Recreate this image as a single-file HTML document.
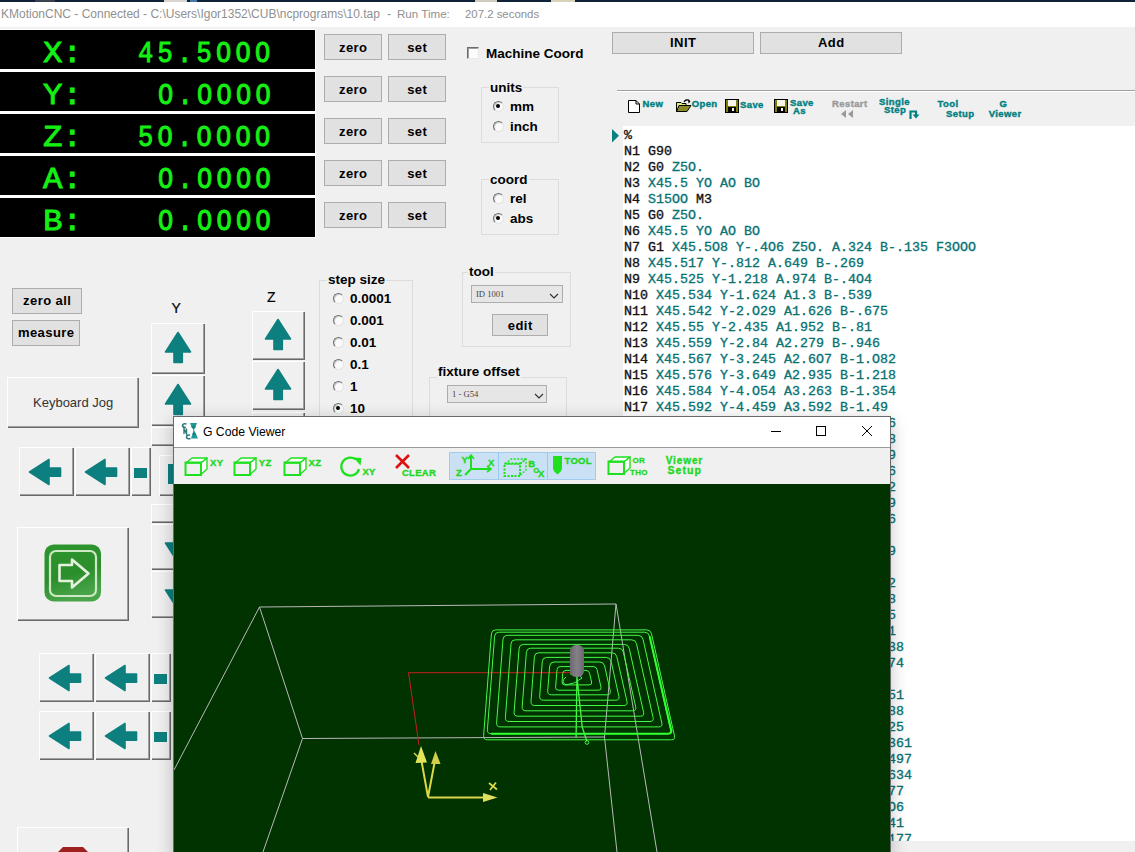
<!DOCTYPE html><html><head><meta charset="utf-8"><style>
*{margin:0;padding:0;box-sizing:border-box}
html,body{width:1135px;height:852px;overflow:hidden;background:#f0f0f0;position:relative;font-family:"Liberation Sans",sans-serif}
.a{position:absolute}
.btn{position:absolute;background:#e1e1e1;border:1px solid #adadad;font-weight:bold;font-size:13px;letter-spacing:0.45px;text-indent:0.45px;color:#000;text-align:center}
.b3{position:absolute;background:#f0f0f0;border-top:1px solid #fff;border-left:1px solid #fff;box-shadow:inset -1px -1px 0 #a0a0a0, 1px 1px 0 #696969}
.grp{position:absolute;border:1px solid #dcdcdc;}
.lbl{position:absolute;font-weight:bold;font-size:13.5px;color:#000;white-space:pre;background:#f0f0f0;line-height:14px;margin-top:1px}
.dro{position:absolute;left:0;width:315px;height:39px;background:#000}
.drot{position:absolute;font-family:"Liberation Mono",monospace;font-weight:normal;-webkit-text-stroke:0.9px #14f014;font-size:32.5px;color:#14f014;line-height:32px;white-space:pre;transform:scaleY(0.89);transform-origin:0 24.7px}
.radio{position:absolute;width:11px;height:11px;margin:0.5px 0 0 0.5px;border-radius:50%;background:#fafafa;border:1px solid;border-color:#707070 #e4e4e4 #e4e4e4 #707070;box-shadow:inset 1px 1px 0 #d0d0d0}
.radio.on::after{content:"";position:absolute;left:2.5px;top:2.5px;width:4px;height:4px;border-radius:50%;background:#000}
.gc{position:absolute;left:624px;font-family:"Liberation Mono",monospace;font-weight:normal;-webkit-text-stroke:0.35px currentColor;font-size:13.333px;line-height:16px;white-space:pre;color:#111;transform:scaleY(0.89);transform-origin:0 11.55px}
.t{color:#087373}
.tb{position:absolute;font-weight:bold;font-size:9.5px;letter-spacing:0.4px;color:#008080;line-height:10px;white-space:pre;-webkit-text-stroke:0.4px currentColor}
.vt{position:absolute;font-weight:bold;font-size:10px;color:#1ed81e;line-height:10px;white-space:pre;-webkit-text-stroke:0.35px currentColor}
</style></head><body>
<div class="a" style="left:0;top:0;width:1135px;height:2px;background:#10213a"></div>
<div class="a" style="left:35px;top:0;width:20px;height:2px;background:#3a4250"></div>
<div class="a" style="left:164px;top:0;width:23px;height:2px;background:#d8d4d0"></div>
<div class="a" style="left:190px;top:0;width:7px;height:2px;background:#4a78a8"></div>
<div class="a" style="left:475px;top:0;width:22px;height:2px;background:#d0ccc0"></div>
<div class="a" style="left:551px;top:0;width:24px;height:2px;background:#d8d2b8"></div>
<div class="a" style="left:0;top:2px;width:1135px;height:25px;background:#fff"></div>
<div class="a" style="left:1px;top:6px;font-size:12px;line-height:16px;color:#909090;white-space:pre">KMotionCNC - Connected - C:\Users\Igor1352\CUB\ncprograms\10.tap</div>
<div class="a" style="left:387px;top:6px;font-size:12px;line-height:16px;color:#909090;white-space:pre">-</div>
<div class="a" style="left:397px;top:6px;font-size:11.6px;line-height:16px;color:#909090;white-space:pre">Run Time:</div>
<div class="a" style="left:465px;top:6px;font-size:11.4px;line-height:16px;color:#8f8f8f;white-space:pre">207.2 seconds</div>
<div class="a" style="left:0;top:29px;width:316px;height:209px;background:#fff"></div>
<div class="dro" style="top:30px"></div>
<div class="drot" style="left:43px;top:37.5px">X:</div>
<div class="drot" style="left:138.1px;top:37.6px;letter-spacing:5.5px;transform:scale(0.78,0.88);-webkit-text-stroke:1.1px #14f014">45.5OOO</div>
<div class="btn" style="left:324px;top:34px;width:58px;height:26px;line-height:25px">zero</div>
<div class="btn" style="left:388px;top:34px;width:58px;height:26px;line-height:25px">set</div>
<div class="dro" style="top:72px"></div>
<div class="drot" style="left:43px;top:79.5px">Y:</div>
<div class="drot" style="left:157.6px;top:79.6px;letter-spacing:5.5px;transform:scale(0.78,0.88);-webkit-text-stroke:1.1px #14f014">O.OOOO</div>
<div class="btn" style="left:324px;top:76px;width:58px;height:26px;line-height:25px">zero</div>
<div class="btn" style="left:388px;top:76px;width:58px;height:26px;line-height:25px">set</div>
<div class="dro" style="top:114px"></div>
<div class="drot" style="left:43px;top:121.5px">Z:</div>
<div class="drot" style="left:138.1px;top:121.6px;letter-spacing:5.5px;transform:scale(0.78,0.88);-webkit-text-stroke:1.1px #14f014">5O.OOOO</div>
<div class="btn" style="left:324px;top:118px;width:58px;height:26px;line-height:25px">zero</div>
<div class="btn" style="left:388px;top:118px;width:58px;height:26px;line-height:25px">set</div>
<div class="dro" style="top:156px"></div>
<div class="drot" style="left:43px;top:163.5px">A:</div>
<div class="drot" style="left:157.6px;top:163.6px;letter-spacing:5.5px;transform:scale(0.78,0.88);-webkit-text-stroke:1.1px #14f014">O.OOOO</div>
<div class="btn" style="left:324px;top:160px;width:58px;height:26px;line-height:25px">zero</div>
<div class="btn" style="left:388px;top:160px;width:58px;height:26px;line-height:25px">set</div>
<div class="dro" style="top:198px"></div>
<div class="drot" style="left:43px;top:205.5px">B:</div>
<div class="drot" style="left:157.6px;top:205.6px;letter-spacing:5.5px;transform:scale(0.78,0.88);-webkit-text-stroke:1.1px #14f014">O.OOOO</div>
<div class="btn" style="left:324px;top:202px;width:58px;height:26px;line-height:25px">zero</div>
<div class="btn" style="left:388px;top:202px;width:58px;height:26px;line-height:25px">set</div>
<div class="a" style="left:467px;top:47px;width:12px;height:12px;background:#fcfcfc;border:1px solid;border-color:#6a6a6a #e8e8e8 #e8e8e8 #6a6a6a;box-shadow:inset 1px 1px 0 #a0a0a0"></div>
<div class="lbl" style="left:486px;top:46px">Machine Coord</div>
<div class="grp" style="left:481px;top:87px;width:78px;height:56px"></div>
<div class="lbl" style="left:489px;top:80px;padding:0 1px">units</div>
<div class="radio on" style="left:492px;top:100px"></div><div class="lbl" style="left:510px;top:99px">mm</div>
<div class="radio" style="left:492px;top:120px"></div><div class="lbl" style="left:510px;top:119px">inch</div>
<div class="grp" style="left:481px;top:179px;width:78px;height:56px"></div>
<div class="lbl" style="left:489px;top:172px;padding:0 1px">coord</div>
<div class="radio" style="left:492px;top:192px"></div><div class="lbl" style="left:510px;top:191px">rel</div>
<div class="radio on" style="left:492px;top:212px"></div><div class="lbl" style="left:510px;top:211px">abs</div>
<div class="grp" style="left:319px;top:280px;width:94px;height:160px"></div>
<div class="lbl" style="left:327px;top:272px;padding:0 1px">step size</div>
<div class="radio" style="left:332px;top:292px"></div><div class="lbl" style="left:350px;top:291px">0.0001</div>
<div class="radio" style="left:332px;top:314px"></div><div class="lbl" style="left:350px;top:313px">0.001</div>
<div class="radio" style="left:332px;top:336px"></div><div class="lbl" style="left:350px;top:335px">0.01</div>
<div class="radio" style="left:332px;top:358px"></div><div class="lbl" style="left:350px;top:357px">0.1</div>
<div class="radio" style="left:332px;top:380px"></div><div class="lbl" style="left:350px;top:379px">1</div>
<div class="radio on" style="left:332px;top:402px"></div><div class="lbl" style="left:350px;top:401px">10</div>
<div class="grp" style="left:462px;top:272px;width:109px;height:75px"></div>
<div class="lbl" style="left:468px;top:264px;padding:0 1px">tool</div>
<div class="a" style="left:471px;top:285px;width:92px;height:18px;background:#e6e6e6;border:1px solid #adadad"></div>
<div class="a" style="left:476px;top:289px;font-family:'Liberation Serif',serif;font-size:8.6px;color:#444;line-height:10px">ID 1001</div>
<svg class="a" style="left:548.5px;top:292.5px" width="10" height="6"><path d="M1 1 L5 5 L9 1" stroke="#333" fill="none" stroke-width="1.2"/></svg>
<div class="btn" style="left:492px;top:314px;width:56px;height:22px;line-height:21px">edit</div>
<div class="grp" style="left:429px;top:377px;width:138px;height:63px"></div>
<div class="lbl" style="left:437px;top:364px;padding:0 1px">fixture offset</div>
<div class="a" style="left:447px;top:385px;width:100px;height:18px;background:#e6e6e6;border:1px solid #adadad"></div>
<div class="a" style="left:452px;top:389px;font-family:'Liberation Serif',serif;font-size:8.6px;color:#444;line-height:10px">1 - G54</div>
<svg class="a" style="left:533.5px;top:392.5px" width="10" height="6"><path d="M1 1 L5 5 L9 1" stroke="#333" fill="none" stroke-width="1.2"/></svg>
<div class="btn" style="left:612px;top:32px;width:142px;height:22px;line-height:19px">INIT</div>
<div class="btn" style="left:760px;top:32px;width:142px;height:22px;line-height:19px">Add</div>
<div class="a" style="left:617px;top:90px;width:518px;height:1px;background:#a0a0a0"></div>
<div class="a" style="left:617px;top:91px;width:518px;height:1px;background:#fff"></div>
<div class="btn" style="left:12px;top:288px;width:70px;height:26px;line-height:24px">zero all</div>
<div class="btn" style="left:12px;top:320px;width:68px;height:26px;line-height:24px">measure</div>
<div class="b3" style="left:7px;top:377px;width:131px;height:50px"></div>
<div class="a" style="left:33px;top:396px;font-size:13px;color:#333;line-height:14px">Keyboard Jog</div>
<div class="a" style="left:171.5px;top:301px;font-size:14px;line-height:14px;-webkit-text-stroke:0.2px #000">Y</div>
<div class="a" style="left:267px;top:289.5px;font-size:14px;line-height:14px;-webkit-text-stroke:0.2px #000">Z</div>
<div class="b3" style="left:151px;top:323px;width:53px;height:50px"></div>
<svg class="a" style="left:164px;top:331px" width="28" height="34" viewBox="0 0 28 34"><path d="M14 1.5 L26.5 21 L18.3 21 L18.3 31.5 L10 31.5 L10 21 L1.5 21 Z" fill="#0d7f7f" stroke="#0d7f7f" stroke-width="1.6" stroke-linejoin="round"/></svg>
<div class="b3" style="left:151px;top:375px;width:53px;height:50px"></div>
<svg class="a" style="left:164px;top:383px" width="28" height="34" viewBox="0 0 28 34"><path d="M14 1.5 L26.5 21 L18.3 21 L18.3 31.5 L10 31.5 L10 21 L1.5 21 Z" fill="#0d7f7f" stroke="#0d7f7f" stroke-width="1.6" stroke-linejoin="round"/></svg>
<div class="b3" style="left:151px;top:427px;width:53px;height:18px"></div>
<div class="b3" style="left:151px;top:504px;width:53px;height:18px"></div>
<div class="b3" style="left:151px;top:524px;width:53px;height:45px"></div>
<svg class="a" style="left:164px;top:530px" width="28" height="34" viewBox="0 0 28 34"><path d="M14 32.5 L26.5 13 L18.3 13 L18.3 2.5 L10 2.5 L10 13 L1.5 13 Z" fill="#0d7f7f" stroke="#0d7f7f" stroke-width="1.6" stroke-linejoin="round"/></svg>
<div class="b3" style="left:151px;top:571px;width:53px;height:46px"></div>
<svg class="a" style="left:164px;top:577px" width="28" height="34" viewBox="0 0 28 34"><path d="M14 32.5 L26.5 13 L18.3 13 L18.3 2.5 L10 2.5 L10 13 L1.5 13 Z" fill="#0d7f7f" stroke="#0d7f7f" stroke-width="1.6" stroke-linejoin="round"/></svg>
<div class="b3" style="left:252px;top:311px;width:52px;height:48px"></div>
<svg class="a" style="left:264px;top:318px" width="28" height="34" viewBox="0 0 28 34"><path d="M14 1.5 L26.5 21 L18.3 21 L18.3 31.5 L10 31.5 L10 21 L1.5 21 Z" fill="#0d7f7f" stroke="#0d7f7f" stroke-width="1.6" stroke-linejoin="round"/></svg>
<div class="b3" style="left:252px;top:361px;width:52px;height:48px"></div>
<svg class="a" style="left:264px;top:368px" width="28" height="34" viewBox="0 0 28 34"><path d="M14 1.5 L26.5 21 L18.3 21 L18.3 31.5 L10 31.5 L10 21 L1.5 21 Z" fill="#0d7f7f" stroke="#0d7f7f" stroke-width="1.6" stroke-linejoin="round"/></svg>
<div class="b3" style="left:252px;top:412px;width:52px;height:48px"></div>
<svg class="a" style="left:264px;top:419px" width="28" height="34" viewBox="0 0 28 34"><path d="M14 1.5 L26.5 21 L18.3 21 L18.3 31.5 L10 31.5 L10 21 L1.5 21 Z" fill="#0d7f7f" stroke="#0d7f7f" stroke-width="1.6" stroke-linejoin="round"/></svg>
<div class="b3" style="left:19px;top:447px;width:54px;height:48px"></div>
<svg class="a" style="left:28px;top:458px" width="34" height="28" viewBox="0 0 34 28"><path d="M1.5 14 L21 1.5 L21 10 L32.5 10 L32.5 18.3 L21 18.3 L21 26.5 Z" fill="#0d7f7f" stroke="#0d7f7f" stroke-width="1.6" stroke-linejoin="round"/></svg>
<div class="b3" style="left:75px;top:447px;width:54px;height:48px"></div>
<svg class="a" style="left:84px;top:458px" width="34" height="28" viewBox="0 0 34 28"><path d="M1.5 14 L21 1.5 L21 10 L32.5 10 L32.5 18.3 L21 18.3 L21 26.5 Z" fill="#0d7f7f" stroke="#0d7f7f" stroke-width="1.6" stroke-linejoin="round"/></svg>
<div class="b3" style="left:131px;top:447px;width:19px;height:48px"></div>
<div class="a" style="left:134px;top:468px;width:13px;height:10px;background:#0d7f7f"></div>
<div class="b3" style="left:159px;top:455px;width:50px;height:40px"></div><div class="a" style="left:168px;top:464px;width:13px;height:20px;background:#0d7f7f"></div>
<div class="b3" style="left:39px;top:653px;width:54px;height:48px"></div>
<svg class="a" style="left:48px;top:664px" width="34" height="28" viewBox="0 0 34 28"><path d="M1.5 14 L21 1.5 L21 10 L32.5 10 L32.5 18.3 L21 18.3 L21 26.5 Z" fill="#0d7f7f" stroke="#0d7f7f" stroke-width="1.6" stroke-linejoin="round"/></svg>
<div class="b3" style="left:95px;top:653px;width:54px;height:48px"></div>
<svg class="a" style="left:104px;top:664px" width="34" height="28" viewBox="0 0 34 28"><path d="M1.5 14 L21 1.5 L21 10 L32.5 10 L32.5 18.3 L21 18.3 L21 26.5 Z" fill="#0d7f7f" stroke="#0d7f7f" stroke-width="1.6" stroke-linejoin="round"/></svg>
<div class="b3" style="left:151px;top:653px;width:19px;height:48px"></div>
<div class="a" style="left:154px;top:674px;width:13px;height:10px;background:#0d7f7f"></div>
<div class="b3" style="left:39px;top:711px;width:54px;height:48px"></div>
<svg class="a" style="left:48px;top:722px" width="34" height="28" viewBox="0 0 34 28"><path d="M1.5 14 L21 1.5 L21 10 L32.5 10 L32.5 18.3 L21 18.3 L21 26.5 Z" fill="#0d7f7f" stroke="#0d7f7f" stroke-width="1.6" stroke-linejoin="round"/></svg>
<div class="b3" style="left:95px;top:711px;width:54px;height:48px"></div>
<svg class="a" style="left:104px;top:722px" width="34" height="28" viewBox="0 0 34 28"><path d="M1.5 14 L21 1.5 L21 10 L32.5 10 L32.5 18.3 L21 18.3 L21 26.5 Z" fill="#0d7f7f" stroke="#0d7f7f" stroke-width="1.6" stroke-linejoin="round"/></svg>
<div class="b3" style="left:151px;top:711px;width:19px;height:48px"></div>
<div class="a" style="left:154px;top:732px;width:13px;height:10px;background:#0d7f7f"></div>
<div class="b3" style="left:17px;top:527px;width:111px;height:93px"></div>
<svg class="a" style="left:44px;top:544px" width="58" height="58" viewBox="0 0 58 58">
<defs><linearGradient id="gg" x1="0" y1="0" x2="0.3" y2="1"><stop offset="0" stop-color="#2e962e"/><stop offset="0.6" stop-color="#2b8e2b"/><stop offset="1" stop-color="#4aa54a"/></linearGradient></defs>
<rect x="0.5" y="0.5" width="56.5" height="57" rx="9" fill="url(#gg)"/>
<rect x="6" y="7" width="46" height="45" rx="6" fill="none" stroke="#cde8c4" stroke-width="2.2"/>
<path d="M15.5 21 L28 21 L28 15.5 L44.5 29.6 L28 43.5 L28 37 L15.5 37 Z" fill="none" stroke="#e4f2dc" stroke-width="2.6" stroke-linejoin="round"/>
</svg>
<div class="b3" style="left:17px;top:827px;width:111px;height:40px"></div>
<svg class="a" style="left:55px;top:847px" width="36" height="10"><path d="M8 0 L28 0 L34 6 L34 10 L2 10 L2 6 Z" fill="#a02020"/></svg>
<div class="a" style="left:623px;top:126px;width:512px;height:715px;background:#fff"></div>
<svg class="a" style="left:612px;top:129px" width="8" height="14"><path d="M0 0 L7 6.8 L0 13.5 Z" fill="#0b8080"/></svg>
<div class="gc" style="top:128px">%</div>
<div class="gc" style="top:144px">N1 G90</div>
<div class="gc" style="top:160px">N2 G0 <span class="t">Z5O.</span></div>
<div class="gc" style="top:176px">N3 <span class="t">X45.5</span> <span class="t">YO</span> <span class="t">AO</span> <span class="t">BO</span></div>
<div class="gc" style="top:192px">N4 <span class="t">S15OO</span> M3</div>
<div class="gc" style="top:208px">N5 G0 <span class="t">Z5O.</span></div>
<div class="gc" style="top:224px">N6 <span class="t">X45.5</span> <span class="t">YO</span> <span class="t">AO</span> <span class="t">BO</span></div>
<div class="gc" style="top:240px">N7 G1 <span class="t">X45.5O8</span> <span class="t">Y-.4O6</span> <span class="t">Z5O.</span> <span class="t">A.324</span> <span class="t">B-.135</span> <span class="t">F3OOO</span></div>
<div class="gc" style="top:256px">N8 <span class="t">X45.517</span> <span class="t">Y-.812</span> <span class="t">A.649</span> <span class="t">B-.269</span></div>
<div class="gc" style="top:272px">N9 <span class="t">X45.525</span> <span class="t">Y-1.218</span> <span class="t">A.974</span> <span class="t">B-.4O4</span></div>
<div class="gc" style="top:288px">N10 <span class="t">X45.534</span> <span class="t">Y-1.624</span> <span class="t">A1.3</span> <span class="t">B-.539</span></div>
<div class="gc" style="top:304px">N11 <span class="t">X45.542</span> <span class="t">Y-2.O29</span> <span class="t">A1.626</span> <span class="t">B-.675</span></div>
<div class="gc" style="top:320px">N12 <span class="t">X45.55</span> <span class="t">Y-2.435</span> <span class="t">A1.952</span> <span class="t">B-.81</span></div>
<div class="gc" style="top:336px">N13 <span class="t">X45.559</span> <span class="t">Y-2.84</span> <span class="t">A2.279</span> <span class="t">B-.946</span></div>
<div class="gc" style="top:352px">N14 <span class="t">X45.567</span> <span class="t">Y-3.245</span> <span class="t">A2.6O7</span> <span class="t">B-1.O82</span></div>
<div class="gc" style="top:368px">N15 <span class="t">X45.576</span> <span class="t">Y-3.649</span> <span class="t">A2.935</span> <span class="t">B-1.218</span></div>
<div class="gc" style="top:384px">N16 <span class="t">X45.584</span> <span class="t">Y-4.O54</span> <span class="t">A3.263</span> <span class="t">B-1.354</span></div>
<div class="gc" style="top:400px">N17 <span class="t">X45.592</span> <span class="t">Y-4.459</span> <span class="t">A3.592</span> <span class="t">B-1.49</span></div>
<div class="gc" style="top:416px">N18 <span class="t">X45.6OO</span> <span class="t">Y-4.863</span> <span class="t">A3.922</span> <span class="t">B-1.726</span></div>
<div class="gc" style="top:432px">N19 <span class="t">X45.6O8</span> <span class="t">Y-5.268</span> <span class="t">A4.252</span> <span class="t">B-1.728</span></div>
<div class="gc" style="top:448px">N20 <span class="t">X45.616</span> <span class="t">Y-5.673</span> <span class="t">A4.582</span> <span class="t">B-1.729</span></div>
<div class="gc" style="top:464px">N21 <span class="t">X45.624</span> <span class="t">Y-6.O78</span> <span class="t">A4.912</span> <span class="t">B-1.726</span></div>
<div class="gc" style="top:480px">N22 <span class="t">X45.632</span> <span class="t">Y-6.483</span> <span class="t">A5.242</span> <span class="t">B-1.722</span></div>
<div class="gc" style="top:496px">N23 <span class="t">X45.64O</span> <span class="t">Y-6.888</span> <span class="t">A5.572</span> <span class="t">B-1.729</span></div>
<div class="gc" style="top:512px">N24 <span class="t">X45.648</span> <span class="t">Y-7.293</span> <span class="t">A5.9O2</span> <span class="t">B-1.726</span></div>
<div class="gc" style="top:528px">N25 <span class="t">X45.656</span> <span class="t">Y-7.698</span> <span class="t">A6.232</span> <span class="t">B-1.7</span></div>
<div class="gc" style="top:544px">N26 <span class="t">X45.664</span> <span class="t">Y-8.1O3</span> <span class="t">A6.562</span> <span class="t">B-1.729</span></div>
<div class="gc" style="top:560px">N27 <span class="t">X45.672</span> <span class="t">Y-8.5O8</span> <span class="t">A6.892</span> <span class="t">B-1.7</span></div>
<div class="gc" style="top:576px">N28 <span class="t">X45.68O</span> <span class="t">Y-8.913</span> <span class="t">A7.222</span> <span class="t">B-1.722</span></div>
<div class="gc" style="top:592px">N29 <span class="t">X45.688</span> <span class="t">Y-9.318</span> <span class="t">A7.552</span> <span class="t">B-1.728</span></div>
<div class="gc" style="top:608px">N30 <span class="t">X45.696</span> <span class="t">Y-9.723</span> <span class="t">A7.882</span> <span class="t">B-1.725</span></div>
<div class="gc" style="top:624px">N31 <span class="t">X45.7O4</span> <span class="t">Y-1O.128</span> <span class="t">A8.212</span> <span class="t">B-1.71</span></div>
<div class="gc" style="top:640px">N32 <span class="t">X45.712</span> <span class="t">Y-1O.533</span> <span class="t">A8.542</span> <span class="t">B-1.738</span></div>
<div class="gc" style="top:656px">N33 <span class="t">X45.72O</span> <span class="t">Y-1O.938</span> <span class="t">A8.872</span> <span class="t">B-1.774</span></div>
<div class="gc" style="top:672px">N34 <span class="t">X45.728</span> <span class="t">Y-11.343</span> <span class="t">A9.2O2</span> <span class="t">B-1.</span></div>
<div class="gc" style="top:688px">N35 <span class="t">X45.736</span> <span class="t">Y-11.748</span> <span class="t">A9.532</span> <span class="t">B-1.751</span></div>
<div class="gc" style="top:704px">N36 <span class="t">X45.744</span> <span class="t">Y-12.153</span> <span class="t">A9.862</span> <span class="t">B-1.788</span></div>
<div class="gc" style="top:720px">N37 <span class="t">X45.752</span> <span class="t">Y-12.558</span> <span class="t">A1O.192</span> <span class="t">B-1.25</span></div>
<div class="gc" style="top:736px">N38 <span class="t">X45.76O</span> <span class="t">Y-12.963</span> <span class="t">A1O.522</span> <span class="t">B-1.361</span></div>
<div class="gc" style="top:752px">N39 <span class="t">X45.768</span> <span class="t">Y-13.368</span> <span class="t">A1O.852</span> <span class="t">B-1.497</span></div>
<div class="gc" style="top:768px">N40 <span class="t">X45.776</span> <span class="t">Y-13.773</span> <span class="t">A11.182</span> <span class="t">B-1.634</span></div>
<div class="gc" style="top:784px">N41 <span class="t">X45.784</span> <span class="t">Y-14.178</span> <span class="t">A11.512</span> <span class="t">B-1.77</span></div>
<div class="gc" style="top:800px">N42 <span class="t">X45.792</span> <span class="t">Y-14.583</span> <span class="t">A11.842</span> <span class="t">B-1.O6</span></div>
<div class="gc" style="top:816px">N43 <span class="t">X45.8OO</span> <span class="t">Y-14.988</span> <span class="t">A12.172</span> <span class="t">B-1.41</span></div>
<div class="gc" style="top:832px">N44 <span class="t">X45.8O8</span> <span class="t">Y-15.393</span> <span class="t">A12.5O2</span> <span class="t">B-1.177</span></div>
<div class="a" style="left:605px;top:841px;width:530px;height:11px;background:#f0f0f0"></div>
<svg class="a" style="left:628px;top:100px" width="12" height="14"><path d="M0.5 0.5 L8 0.5 L11.5 4 L11.5 12.5 L0.5 12.5 Z" fill="#fff" stroke="#000"/><path d="M8 0.5 L8 4 L11.5 4" fill="none" stroke="#000"/></svg>
<div class="tb" style="left:642.5px;top:99.2px;color:#008080">New</div>
<svg class="a" style="left:676px;top:98px" width="16" height="15" viewBox="0 0 16 15"><path d="M0.5 4.5 L5 4.5 L6 5.5 L10 5.5 L10 7.5 L0.5 13.5 Z" fill="#e8e878" stroke="#000"/><path d="M3 7.5 L15 7.5 L11 13.5 L0.5 13.5 Z" fill="#8a8a28" stroke="#000"/><path d="M8 4 Q10 0.5 13.5 2.5" fill="none" stroke="#000" stroke-width="1.2"/><path d="M12 1.5 L14.5 3.5 L12.5 5.5 Z" fill="#000"/></svg>
<div class="tb" style="left:691.7px;top:99.2px;color:#008080">Open</div>
<svg class="a" style="left:725px;top:99px" width="15" height="15" viewBox="0 0 15 15"><rect x="0" y="0" width="14" height="14" fill="#000"/><rect x="1" y="1" width="12" height="12" fill="#7c7c10"/><rect x="3" y="1" width="8" height="6" fill="#f4f4e8"/><rect x="3" y="8" width="8" height="5" fill="#000"/><rect x="7" y="9" width="2" height="3" fill="#f4f4e8"/></svg>
<div class="tb" style="left:740px;top:100.4px;color:#008080">Save</div>
<svg class="a" style="left:774px;top:99px" width="15" height="15" viewBox="0 0 15 15"><rect x="0" y="0" width="14" height="14" fill="#000"/><rect x="1" y="1" width="12" height="12" fill="#7c7c10"/><rect x="3" y="1" width="8" height="6" fill="#f4f4e8"/><rect x="3" y="8" width="8" height="5" fill="#000"/><rect x="7" y="9" width="2" height="3" fill="#f4f4e8"/></svg>
<div class="tb" style="left:790px;top:97.6px;color:#008080">Save</div>
<div class="tb" style="left:793px;top:106.2px;color:#008080">As</div>
<div class="tb" style="left:832px;top:98.7px;color:#9a9a9a">Restart</div>
<svg class="a" style="left:841px;top:110px" width="13" height="8"><path d="M0 4 L5 0 L5 8 Z M7 4 L12 0 L12 8 Z" fill="#9a9a9a"/></svg>
<div class="tb" style="left:879px;top:96.8px;color:#008080">Single</div>
<div class="tb" style="left:884px;top:105.2px;color:#008080">Step</div>
<svg class="a" style="left:909px;top:110px" width="12" height="9"><path d="M1.5 9 L1.5 1.5 L7 1.5 L7 5" fill="none" stroke="#008080" stroke-width="2.2"/><path d="M3.5 4.5 L10.5 4.5 L7 8.5 Z" fill="#008080"/></svg>
<div class="tb" style="left:937.5px;top:98.7px;color:#008080">Tool</div>
<div class="tb" style="left:946px;top:108.9px;color:#008080">Setup</div>
<div class="tb" style="left:999.5px;top:98.7px;color:#008080">G</div>
<div class="tb" style="left:988.7px;top:108.9px;color:#008080">Viewer</div>
<div class="a" style="left:174px;top:417px;width:716px;height:440px;box-shadow:0 4px 16px 1px rgba(0,0,0,0.24)"></div>
<div class="a" style="left:173px;top:416px;width:718px;height:440px;background:#fff;border:1px solid #6a6a6a"></div>
<div class="a" style="left:174px;top:447px;width:716px;height:1px;background:#9a9a9a"></div>
<div class="a" style="left:174px;top:448px;width:716px;height:36px;background:#f0f0f0"></div>
<svg class="a" style="left:178px;top:419px" width="24" height="24" viewBox="0 0 24 24"><path d="M8.5 5 Q5 4 4.5 6.5 Q5 9 8 8.5" fill="none" stroke="#2a7878" stroke-width="1.5"/><path d="M6 15 L6 10 L8.5 14.5 L8.5 9.5" fill="none" stroke="#2a7878" stroke-width="1.4"/><path d="M12 16 Q8.5 15.5 8.5 18 Q9 20.5 12.5 19.5" fill="none" stroke="#2a7878" stroke-width="1.5"/><path d="M12 4 L19 4 L17.5 8 L16 11 L18 15 L20 19.5 L13 19.5 L14.5 15 L15.5 11 L13.5 8 Z" fill="#1f9a9a"/><path d="M13.5 8 L17.5 8 M14.5 15 L18 15" stroke="#106060" stroke-width="1"/></svg>
<div class="a" style="left:203px;top:424px;font-size:12.2px;line-height:16px;color:#000">G Code Viewer</div>
<svg class="a" style="left:760px;top:420px" width="130" height="24"><path d="M11 11.5 L21 11.5" stroke="#000"/><rect x="56.5" y="6.5" width="9" height="9" fill="none" stroke="#000"/><path d="M102 6 L112 16 M112 6 L102 16" stroke="#000"/></svg>
<div class="a" style="left:449px;top:452px;width:147px;height:28px;background:#c9e0f5;border:1px solid #a2cbee"></div>
<div class="a" style="left:498px;top:452px;width:1px;height:28px;background:#99c9ef"></div>
<div class="a" style="left:547px;top:452px;width:1px;height:28px;background:#99c9ef"></div>
<svg class="a" style="left:184px;top:456px" width="26" height="21" viewBox="0 0 26 21"><path d="M2 7 L8 2 L23 2 L17 7 Z" fill="#fff" stroke="#1ee01e" stroke-width="1.4" stroke-linejoin="round"/><path d="M17 7 L23 2 L23 13 L17 18.5 Z" fill="#fff" stroke="#1ee01e" stroke-width="1.4" stroke-linejoin="round"/><path d="M1.5 6.5 L17 6.5 L17 19 L1.5 19 Z" fill="none" stroke="#1ee01e" stroke-width="2"/></svg>
<div class="vt" style="left:210px;top:458.4px;font-size:9.5px;letter-spacing:0.3px">XY</div>
<svg class="a" style="left:233px;top:456px" width="26" height="21" viewBox="0 0 26 21"><path d="M2 7 L8 2 L23 2 L17 7 Z" fill="#fff" stroke="#1ee01e" stroke-width="1.4" stroke-linejoin="round"/><path d="M17 7 L23 2 L23 13 L17 18.5 Z" fill="#fff" stroke="#1ee01e" stroke-width="1.4" stroke-linejoin="round"/><path d="M1.5 6.5 L17 6.5 L17 19 L1.5 19 Z" fill="none" stroke="#1ee01e" stroke-width="2"/></svg>
<div class="vt" style="left:258.8px;top:458.4px;font-size:9.5px;letter-spacing:0.3px">YZ</div>
<svg class="a" style="left:283px;top:456px" width="26" height="21" viewBox="0 0 26 21"><path d="M2 7 L8 2 L23 2 L17 7 Z" fill="#fff" stroke="#1ee01e" stroke-width="1.4" stroke-linejoin="round"/><path d="M17 7 L23 2 L23 13 L17 18.5 Z" fill="#fff" stroke="#1ee01e" stroke-width="1.4" stroke-linejoin="round"/><path d="M1.5 6.5 L17 6.5 L17 19 L1.5 19 Z" fill="none" stroke="#1ee01e" stroke-width="2"/></svg>
<div class="vt" style="left:308.6px;top:458.4px;font-size:9.5px;letter-spacing:0.3px">XZ</div>
<svg class="a" style="left:340px;top:455px" width="24" height="22"><path d="M18.96 14.08 A9 9 0 1 1 15.5 4.2" fill="none" stroke="#1ee01e" stroke-width="2.3"/><path d="M13.5 2.5 L21.5 3 L20.5 10.5 Z" fill="#1ee01e"/></svg>
<div class="vt" style="left:362.4px;top:467.1px;font-size:9.5px;letter-spacing:0.3px">XY</div>
<svg class="a" style="left:394px;top:454px" width="18" height="16"><path d="M2 1 L15 14 M15 1 L2 14" stroke="#e01010" stroke-width="2.6"/></svg>
<div class="vt" style="left:401.9px;top:467.8px;font-size:9.5px;letter-spacing:0.3px">CLEAR</div>
<svg class="a" style="left:455px;top:454px" width="42" height="24"><path d="M16 2 L16 15 L35 15 M16 15 L10 21" fill="none" stroke="#1ee01e" stroke-width="2"/><path d="M13 5 L16 1 L19 5 M32 12 L36 15 L32 18" fill="none" stroke="#1ee01e" stroke-width="1.6"/></svg>
<div class="vt" style="left:461.5px;top:455.1px;font-size:9.5px;letter-spacing:0.3px">Y</div>
<div class="vt" style="left:488px;top:458.3px;font-size:9.5px;letter-spacing:0.3px">X</div>
<div class="vt" style="left:456px;top:468.2px;font-size:9.5px;letter-spacing:0.3px">Z</div>
<svg class="a" style="left:503px;top:457px" width="26" height="21" viewBox="0 0 26 21"><path d="M2 7 L8 2 L23 2 L17 7 Z" fill="none" stroke="#1ee01e" stroke-width="1.4" stroke-linejoin="round" stroke-dasharray="2,1.5"/><path d="M17 7 L23 2 L23 13 L17 18.5 Z" fill="none" stroke="#1ee01e" stroke-width="1.4" stroke-linejoin="round" stroke-dasharray="2,1.5"/><path d="M1.5 6.5 L17 6.5 L17 19 L1.5 19 Z" fill="none" stroke="#1ee01e" stroke-width="2" stroke-dasharray="2,1.5"/></svg>
<div class="vt" style="left:528.3px;top:458.7px;font-size:9.5px;letter-spacing:0.3px">B</div>
<div class="vt" style="left:533.5px;top:466.1px;font-size:7px;letter-spacing:0.3px">O</div>
<div class="vt" style="left:538px;top:468.7px;font-size:9.5px;letter-spacing:0.3px">X</div>
<svg class="a" style="left:553px;top:456px" width="10" height="19"><path d="M0 0 L9 0 L9 12 Q9 15 4.5 18.5 Q0 15 0 12 Z" fill="#1ee01e"/></svg>
<div class="vt" style="left:564.6px;top:455.9px;font-size:9.5px;letter-spacing:0.25px">TOOL</div>
<svg class="a" style="left:607px;top:455px" width="26" height="21" viewBox="0 0 26 21"><path d="M2 7 L8 2 L23 2 L17 7 Z" fill="#fff" stroke="#1ee01e" stroke-width="1.4" stroke-linejoin="round"/><path d="M17 7 L23 2 L23 13 L17 18.5 Z" fill="#fff" stroke="#1ee01e" stroke-width="1.4" stroke-linejoin="round"/><path d="M1.5 6.5 L17 6.5 L17 19 L1.5 19 Z" fill="none" stroke="#1ee01e" stroke-width="2"/></svg>
<div class="vt" style="left:632.4px;top:456.2px;font-size:8px;letter-spacing:0.3px">OR</div>
<div class="vt" style="left:630px;top:468.0px;font-size:8px;letter-spacing:0.3px">THO</div>
<div class="vt" style="left:665.7px;top:455.7px;font-size:10px;letter-spacing:0.9px">Viewer</div>
<div class="vt" style="left:667.4px;top:464.6px;font-size:10.5px;letter-spacing:1.1px">Setup</div>
<svg class="a" style="left:174px;top:484px" width="716" height="368" viewBox="174 484 716 368"><rect x="174" y="484" width="716" height="368" fill="#003300"/><line x1="259.5" y1="607" x2="616" y2="604" stroke="#b8b8b8" stroke-width="1"/><line x1="259.5" y1="607" x2="174" y2="770" stroke="#b8b8b8" stroke-width="1"/><line x1="259.5" y1="607" x2="302.5" y2="738.5" stroke="#b8b8b8" stroke-width="1"/><line x1="302.5" y1="738.5" x2="604.5" y2="737" stroke="#b8b8b8" stroke-width="1"/><line x1="302.5" y1="738.5" x2="263" y2="852" stroke="#b8b8b8" stroke-width="1"/><line x1="616" y1="604" x2="604.5" y2="737" stroke="#b8b8b8" stroke-width="1"/><line x1="604.5" y1="737" x2="617" y2="852" stroke="#b8b8b8" stroke-width="1"/><line x1="616" y1="604" x2="657" y2="852" stroke="#b8b8b8" stroke-width="1"/><path d="M576 672.7 L408.5 672.7 L419 745" fill="none" stroke="#c81e1e" stroke-width="1"/><path d="M491.4 633.9 Q491.7 629.9 495.7 629.9 L646.6 629.9 Q650.6 629.9 651.5 633.8 L674.5 735.9 Q675.4 739.8 671.4 739.8 L487.3 739.8 Q483.3 739.8 483.6 735.8 Z" fill="none" stroke="#46f846" stroke-width="1"/><path d="M494.6 636.2 Q494.9 632.2 498.9 632.2 L644.6 632.2 Q648.6 632.2 649.5 636.1 L670.5 729.8 Q671.4 733.7 667.4 733.7 L491.1 733.7 Q487.1 733.7 487.4 729.7 Z" fill="none" stroke="#46f846" stroke-width="1"/><path d="M649.6 636.2 L671.4 730.7 Q671.4 733.7 667.4 733.7 L491.1 733.7" fill="none" stroke="#30ff30" stroke-width="2"/><path d="M503.0 639.3 Q503.3 635.3 507.3 635.3 L638.1 635.3 Q642.1 635.3 643.0 639.2 L661.8 723.0 Q662.7 726.9 658.7 726.9 L500.3 726.9 Q496.3 726.9 496.6 722.9 Z" fill="none" stroke="#46f846" stroke-width="1"/><path d="M511.0 643.8 Q511.3 639.8 515.3 639.8 L631.6 639.8 Q635.6 639.8 636.5 643.7 L653.1 717.6 Q654.0 721.5 650.0 721.5 L509.1 721.5 Q505.1 721.5 505.4 717.5 Z" fill="none" stroke="#46f846" stroke-width="1"/><path d="M519.1 648.4 Q519.4 644.4 523.4 644.4 L624.3 644.4 Q628.3 644.4 629.2 648.3 L643.6 712.3 Q644.5 716.2 640.5 716.2 L517.8 716.2 Q513.8 716.2 514.1 712.2 Z" fill="none" stroke="#46f846" stroke-width="1"/><path d="M526.4 652.2 Q526.7 648.2 530.7 648.2 L618.5 648.2 Q622.5 648.2 623.3 652.1 L635.7 706.9 Q636.5 710.8 632.5 710.8 L525.9 710.8 Q521.9 710.8 522.2 706.8 Z" fill="none" stroke="#46f846" stroke-width="1"/><path d="M534.4 656.8 Q534.7 652.8 538.7 652.8 L612.0 652.8 Q616.0 652.8 616.8 656.7 L627.0 701.6 Q627.8 705.5 623.8 705.5 L534.7 705.5 Q530.7 705.5 531.0 701.5 Z" fill="none" stroke="#46f846" stroke-width="1"/><path d="M542.3 661.4 Q542.6 657.4 546.6 657.4 L606.2 657.4 Q610.2 657.4 611.1 661.3 L618.9 696.3 Q619.8 700.2 615.8 700.2 L543.4 700.2 Q539.4 700.2 539.7 696.2 Z" fill="none" stroke="#46f846" stroke-width="1"/><path d="M549.7 666.0 Q550.0 662.0 554.0 662.0 L599.7 662.0 Q603.7 662.0 604.6 665.9 L610.2 690.9 Q611.1 694.8 607.1 694.8 L551.4 694.8 Q547.4 694.8 547.7 690.8 Z" fill="none" stroke="#46f846" stroke-width="1"/><path d="M557.0 669.6 Q557.2 666.6 560.2 666.6 L593.3 666.6 Q596.3 666.6 597.0 669.5 L601.0 687.3 Q601.7 690.2 598.7 690.2 L558.4 690.2 Q555.4 690.2 555.6 687.2 Z" fill="none" stroke="#46f846" stroke-width="1"/><path d="M562.7 673.4 Q563.0 670.4 566.0 670.4 L586.0 670.4 Q589.0 670.4 589.6 673.3 L591.6 682.0 Q592.2 684.9 589.2 684.9 L564.8 684.9 Q561.8 684.9 562.1 681.9 Z" fill="none" stroke="#46f846" stroke-width="1"/><path d="M566 677 Q560 682 566 685 Q575 684 582 678 Q578 672 570 674" fill="none" stroke="#46f846" stroke-width="1"/><path d="M576.9 676.5 L576.1 737.6 M576.9 676.5 L582.2 726.9 L586.8 741" fill="none" stroke="#46f846" stroke-width="1.3"/><circle cx="587" cy="742.5" r="1.8" fill="none" stroke="#46f846" stroke-width="1"/><defs><linearGradient id="tg" x1="0" x2="1"><stop offset="0" stop-color="#6a6a70"/><stop offset="0.5" stop-color="#858088"/><stop offset="1" stop-color="#6a6670"/></linearGradient></defs><rect x="570" y="645" width="14" height="32" rx="6" fill="url(#tg)"/><path d="M428 797.5 L486 797.5" stroke="#d8d848" stroke-width="2.2"/><path d="M483 793 L497.5 797.5 L483 802 Z" fill="#e0e060"/><path d="M489 783 L497 789.5 M496 782.5 L490 790" stroke="#d8d848" stroke-width="1.8"/><path d="M428 797 L421.5 761 M428 797 L434.5 763" stroke="#d8d848" stroke-width="2"/><path d="M421 746 L415.5 763 L427 762.5 Z" fill="#e4e458"/><path d="M435.5 751 L431 764 L440.5 764 Z" fill="#cfcf4a"/><path d="M414 753 L418 757" stroke="#d8d848" stroke-width="1.5"/></svg>
</body></html>
